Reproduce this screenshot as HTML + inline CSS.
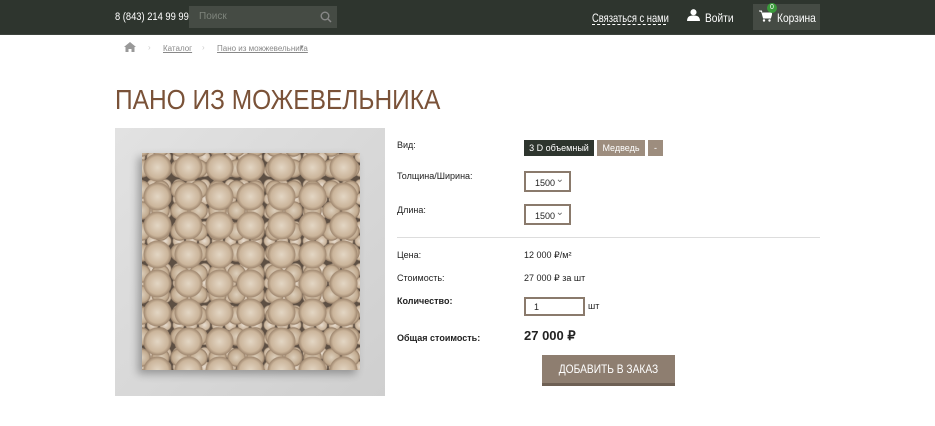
<!DOCTYPE html>
<html><head><meta charset="utf-8"><style>
*{margin:0;padding:0;box-sizing:border-box}
body{width:935px;height:426px;background:#fff;font-family:"Liberation Sans",sans-serif;position:relative;overflow:hidden;color:#222}
.hdr{position:absolute;left:0;top:0;width:935px;height:35px;background:#2e352e;border-bottom:1px solid #3d433d}
.abs{position:absolute}
.sx{transform:scaleX(.85);transform-origin:left center;white-space:nowrap}
.ph{left:115px;top:11px;color:#fff;font-size:11px}
.srch{left:189px;top:6px;width:148px;height:22px;background:#454b44}
.srch span{position:absolute;left:10px;top:5px;font-size:10px;color:#7e847c}
.wt{color:#fff;font-size:12px}
.cart{left:753px;top:4px;width:67px;height:26px;background:#454b44}
.bc{font-size:8px;color:#888;text-decoration:underline}
h1{position:absolute;left:115px;top:84px;font-size:28px;font-weight:normal;color:#7a5238;transform:scaleX(.875);transform-origin:left top;white-space:nowrap}
.img{left:115px;top:128px;width:270px;height:268px;background:linear-gradient(135deg,#e2e2e2,#cfcfcf)}
.panel{left:142px;top:153px;width:218px;height:217px;background-color:#5d4f43;
background-image:
radial-gradient(circle,#e3d6c4 0,#cbb59b 50%,#a38b73 64%,transparent 68%),
radial-gradient(circle,#ddd0bd 0,#c2ab90 50%,#98816a 63%,transparent 67%),
radial-gradient(circle,#e8ddd0 0,#c9b39a 52%,transparent 66%);
background-size:31px 29px,19px 21px,13px 14px;background-position:0 0,9px 5px,4px 11px;box-shadow:-4px 4px 8px rgba(0,0,0,.3)}
.lb{font-size:9px;color:#222}
.b{font-weight:bold}
.btn{font-size:9px;color:#fff;height:16px;line-height:16px;text-align:center}
.sel{width:47px;height:21px;border:2px solid #8a7a6c;background:#fff;font-size:9px;padding:5px 0 0 9px}
.sel:after{content:"⌄";position:absolute;right:5px;top:1px;font-size:10px;color:#666}
</style></head><body>
<div class="hdr"></div>
<div class="abs ph sx">8 (843) 214 99 99</div>
<div class="abs srch"><span>Поиск</span>
<svg style="position:absolute;right:5px;top:5px" width="12" height="12" viewBox="0 0 12 12"><circle cx="5" cy="5" r="3.8" stroke="#888" stroke-width="1.4" fill="none"/><path d="M8 8l3 3" stroke="#888" stroke-width="1.5"/></svg></div>
<div class="abs wt" style="left:592px;top:11px;width:74px;height:14px"><span class="sx" style="display:inline-block;transform:scaleX(.78)">Связаться с нами</span><div style="position:absolute;left:0;top:13px;width:74px;border-bottom:1px dashed #fff"></div></div>
<svg class="abs" style="left:687px;top:9px" width="13" height="12" viewBox="0 0 14 13"><circle cx="7" cy="3.5" r="3.3" fill="#fff"/><path d="M0 13c0-5 3-6 7-6s7 1 7 6z" fill="#fff"/></svg>
<div class="abs wt sx" style="left:705px;top:11px">Войти</div>
<div class="abs cart"></div>
<svg class="abs" style="left:759px;top:10px" width="13" height="12" viewBox="0 0 13 12"><path d="M0 1h2.5l2 7h7l1.5-5H4" fill="#fff" stroke="#fff" stroke-width="1"/><circle cx="5" cy="10.5" r="1.2" fill="#fff"/><circle cx="10.5" cy="10.5" r="1.2" fill="#fff"/></svg>
<div class="abs" style="left:767px;top:3px;width:10px;height:10px;border-radius:50%;background:#3a9a3a;color:#fff;font-size:7px;text-align:center;line-height:10px">0</div>
<div class="abs wt sx" style="left:777px;top:11px">Корзина</div>
<svg class="abs" style="left:124px;top:42px" width="12" height="10" viewBox="0 0 12 10"><path d="M6 0L0 5h1.5v5h3V7h3v3h3V5H12z" fill="#999"/></svg>
<div class="abs" style="left:148px;top:43px;font-size:8px;color:#ccc">›</div>
<div class="abs bc" style="left:163px;top:44px">Каталог</div>
<div class="abs" style="left:202px;top:43px;font-size:8px;color:#ccc">›</div>
<div class="abs bc" style="left:217px;top:44px">Пано из можжевельника</div>
<div class="abs" style="left:300px;top:43px;font-size:7px;color:#888">▾</div>
<h1>ПАНО ИЗ МОЖЕВЕЛЬНИКА</h1>
<div class="abs img"></div>
<div class="abs panel"></div>
<div class="abs lb" style="left:397px;top:140px">Вид:</div>
<div class="abs btn" style="left:524px;top:140px;width:70px;background:#2e352e">3 D объемный</div>
<div class="abs btn" style="left:597px;top:140px;width:48px;background:#9d8d7e">Медведь</div>
<div class="abs btn" style="left:648px;top:140px;width:15px;background:#9d8d7e">-</div>
<div class="abs lb" style="left:397px;top:171px">Толщина/Ширина:</div>
<div class="abs sel" style="left:524px;top:171px">1500</div>
<div class="abs lb" style="left:397px;top:205px">Длина:</div>
<div class="abs sel" style="left:524px;top:204px">1500</div>
<div class="abs" style="left:397px;top:237px;width:423px;height:1px;background:#ddd"></div>
<div class="abs lb" style="left:397px;top:250px">Цена:</div>
<div class="abs lb" style="left:524px;top:250px">12 000 ₽/м²</div>
<div class="abs lb" style="left:397px;top:273px">Стоимость:</div>
<div class="abs lb" style="left:524px;top:273px">27 000 ₽ за шт</div>
<div class="abs lb b" style="left:397px;top:296px">Количество:</div>
<div class="abs" style="left:524px;top:297px;width:61px;height:19px;border:2px solid #8a7a6c;font-size:9px;padding:3px 0 0 8px">1</div>
<div class="abs lb" style="left:588px;top:301px">шт</div>
<div class="abs lb b" style="left:397px;top:333px">Общая стоимость:</div>
<div class="abs b" style="left:524px;top:328px;font-size:13px">27 000 ₽</div>
<div class="abs" style="left:542px;top:355px;width:133px;height:31px;background:#8e7e70;border-bottom:3px solid #6e6054;color:#fff;font-size:12px;text-align:center;line-height:29px"><span style="display:inline-block;transform:scaleX(.85)">ДОБАВИТЬ В ЗАКАЗ</span></div>
</body></html>
